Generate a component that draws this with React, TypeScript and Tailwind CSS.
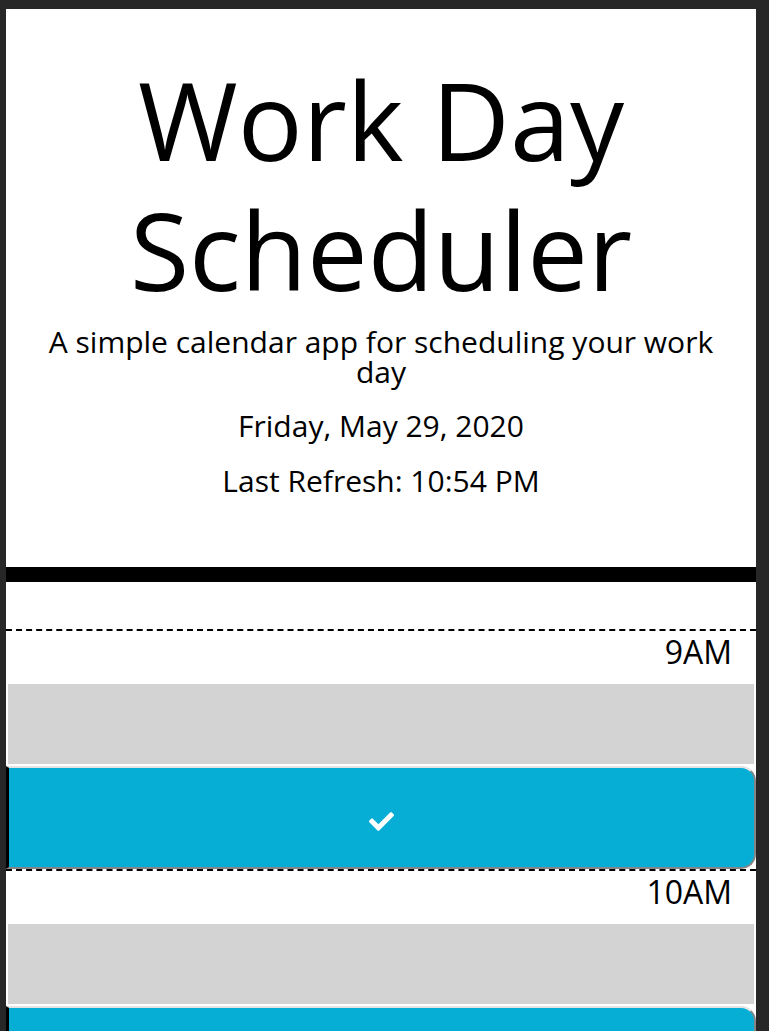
import { FaCheck } from "react-icons/fa";

const hours = ["9AM", "10AM", "11AM"];

function TimeBlock({ hour }: { hour: string }) {
  return (
    <div>
      {/* hour label */}
      <div className="h-[53px] border-t-2 border-dashed border-black pt-[2px] pr-6 text-right text-[32px] leading-[1.2] text-black">
        {hour}
      </div>
      {/* past event textarea */}
      <textarea
        className="block h-[84px] w-full resize-none border-2 border-white bg-[#d3d3d3] outline-none"
        readOnly
      />
      {/* save button */}
      <button className="flex h-[103px] w-full items-center justify-center rounded-r-[15px] border-t-2 border-r-2 border-b-2 border-l-[3px] border-t-[#e3e3e3] border-r-[#858585] border-b-[#858585] border-l-black bg-[#06aed5] pt-[8px] text-white">
        <FaCheck size={25} />
      </button>
    </div>
  );
}

export default function App() {
  return (
    <div
      className="min-h-screen bg-[#272727] pt-[9px] pl-[6px]"
      style={{ fontFamily: '"Open Sans", "Liberation Sans", sans-serif' }}
    >
      <div className="w-[750px] bg-white">
        <header className="border-b-[15px] border-black px-8 pt-[46px] pb-[64px] text-center text-black">
          <h1 className="text-[108px] leading-[1.2] font-normal">Work Day Scheduler</h1>
          <p className="mt-[13px] text-[30px] leading-[1]">
            A simple calendar app for scheduling your work day
          </p>
          <p className="mt-[16px] text-[30px] leading-[1.5]">Friday, May 29, 2020</p>
          <p className="mt-[10px] text-[30px] leading-[1.5]">Last Refresh: 10:54 PM</p>
        </header>
        <div className="pt-[47px]">
          {hours.map((h) => (
            <TimeBlock key={h} hour={h} />
          ))}
        </div>
      </div>
    </div>
  );
}
